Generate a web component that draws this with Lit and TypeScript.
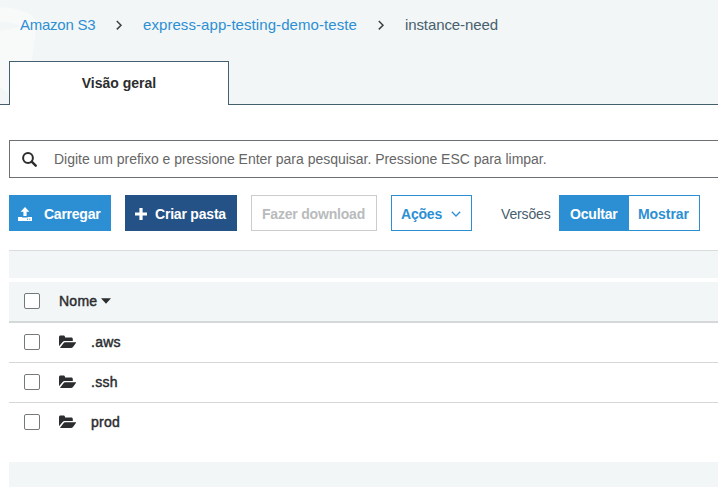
import { LitElement, html, css } from "lit";
import { customElement } from "lit/decorators.js";

const chevron = html`<svg class="chev" width="8" height="11" viewBox="0 0 8 11"><path d="M1.8 1 6 5.2 1.8 9.4" fill="none" stroke="#3c4245" stroke-width="1.5"/></svg>`;

const checkbox = html`<span class="check" role="checkbox" aria-checked="false"></span>`;

const folder = html`<svg class="folder" width="17" height="14" viewBox="0 0 17 14">
  <path d="M0 10.6V2C0 1.1.6.5 1.5.5h3C5.4.5 6 1.1 6 2v.5h6.3c.9 0 1.5.6 1.5 1.5v1.9H6c-1 0-2 .5-2.6 1.3L.2 11Z" fill="#2b2d2e"/>
  <path d="M.9 13 4.3 8.5C4.8 7.8 5.5 7.3 6.3 7.3H16.4c.6 0 .8.4.5.8L14 12c-.5.6-1.2 1-2 1Z" fill="#2b2d2e"/>
</svg>`;

const rows = [".aws", ".ssh", "prod"];

@customElement("app-root")
export class AppRoot extends LitElement {
  static styles = css`
    :host { display: block; height: 487px; overflow: hidden; background: #fff; color: #2b2d2e;
      font: 14px/20px "Liberation Sans", Arial, sans-serif; }
    * { box-sizing: border-box; }
    svg { display: block; flex: none; }
    .head { position: relative; height: 105px; background: #f2f6f7; border-bottom: 1px solid #44606f; }
    .mark { position: absolute; left: 0; top: 0; }
    .crumbs { position: relative; display: flex; align-items: center; height: 50px; padding-left: 20px; white-space: nowrap; color: #48606d; font-size: 15px; }
    .crumbs a { color: #2d8fd3; }
    .crumbs .home { width: 75px; letter-spacing: -0.25px; }
    .crumbs .bucket { width: 214px; letter-spacing: 0.07px; }
    .crumbs .here { letter-spacing: -0.1px; }
    .chev { margin: 0 20px; }
    .tab { position: relative; width: 220px; height: 44px; margin: 11px 0 0 9px; padding-bottom: 1px; background: #fff;
      border: 1px solid #44606f; border-bottom: 0; display: flex; align-items: center; justify-content: center; font-weight: bold; }
    .main { padding-left: 9px; }
    .search { margin-top: 35px; height: 38px; border: 1px solid #6d7073; border-right: 0; display: flex; align-items: center; color: #666; padding-left: 12px; gap: 17px; white-space: nowrap; letter-spacing: -0.02px; }
    .bar { display: flex; margin-top: 17px; height: 36px; align-items: center; white-space: nowrap; }
    .btn { height: 36px; display: flex; align-items: center; font-weight: bold; border: 1px solid #2d8fd3; color: #2d8fd3; background: #fff; margin-right: 14px; padding-top: 1px; letter-spacing: -0.2px; }
    .up { width: 102px; background: #2d8fd3; color: #fff; padding-left: 8px; gap: 12px; letter-spacing: -0.25px; }
    .new { width: 112px; background: #245186; border-color: #245186; color: #fff; padding-left: 9px; gap: 8px; }
    .down { width: 126px; border-color: #ccc; color: #b9bbbc; padding-left: 10px; }
    .acts { width: 81px; padding-left: 9px; margin-right: 29px; }
    .acts span { width: 50px; }
    .ver { color: #48606d; width: 58px; padding-top: 1px; letter-spacing: -0.15px; }
    .seg { margin: 0; padding-left: 10px; }
    .hide { width: 70px; background: #2d8fd3; color: #fff; }
    .show { width: 71px; padding-left: 9px; border-left: 0; letter-spacing: -0.05px; }
    .strip { height: 28px; margin-top: 19px; background: #f2f6f7; border-top: 1px solid #d9dddd; }
    .row { height: 40px; border-bottom: 1px solid #d5d8d8; display: flex; align-items: center; padding: 0 0 1px 15px; letter-spacing: 0.25px; -webkit-text-stroke: 0.45px #2b2d2e; }
    .row.last { border-color: transparent; }
    .th { height: 41px; margin-top: 4px; background: #f2f6f7; border-bottom: 2px solid #d5d8d8; }
    .check { width: 16px; height: 16px; flex: none; border: 1px solid #74797c; border-radius: 2px; background: #fff; margin-right: 19px; }
    .folder { margin-right: 15px; }
    .caret { margin-left: 4px; }
    .foot { height: 25px; margin-top: 19px; background: #f2f6f7; }
  `;

  render() {
    return html`
      <div class="head">
        <svg class="mark" width="40" height="104" viewBox="0 0 40 104">
          <path d="M0 7C18 8 36 14 37 23L31 66 27 92Q14 84 0 68Z" fill="#f8fafa"/>
          <path d="M0 22Q12 22 20 26Q12 30 0 31Z" fill="#f2f6f7"/>
          <path d="M0 68V87Q6 91 10 96V76Z" fill="#f8fafa"/>
        </svg>
        <div class="crumbs">
          <a class="home">Amazon S3</a>${chevron}<a class="bucket">express-app-testing-demo-teste</a>${chevron}<span class="here">instance-need</span>
        </div>
        <div class="tab">Visão geral</div>
      </div>
      <div class="main">
        <div class="search">
          <svg width="15" height="15" viewBox="0 0 15 15" fill="none" stroke="#2b2d2e"><circle cx="6" cy="6" r="4.9" stroke-width="2"/><path d="m9.7 9.7 4 4" stroke-width="2.4" stroke-linecap="round"/></svg>
          <span>Digite um prefixo e pressione Enter para pesquisar. Pressione ESC para limpar.</span>
        </div>
        <div class="bar">
          <div class="btn up">
            <svg width="14" height="14" viewBox="0 0 14 14" fill="#fff"><path d="M7 0 11.4 4.8H8.6V9H5.4V4.8H2.6Z"/><path fill-rule="evenodd" d="M0 10h4.2v.6h5.6V10H14v4H0Zm9 1.7v1h1v-1Zm2.2 0v1h1v-1Z"/></svg>
            <span>Carregar</span>
          </div>
          <div class="btn new">
            <svg width="12" height="12" viewBox="0 0 12 12"><path d="M6 0v12M0 6h12" stroke="#fff" stroke-width="3.2"/></svg>
            <span>Criar pasta</span>
          </div>
          <div class="btn down">Fazer download</div>
          <div class="btn acts"><span>Ações</span>
            <svg width="10" height="6" viewBox="0 0 10 6"><path d="m.8.8 4.2 4.2L9.2.8" fill="none" stroke="#2d8fd3" stroke-width="1.3"/></svg>
          </div>
          <span class="ver">Versões</span>
          <div class="btn seg hide">Ocultar</div>
          <div class="btn seg show">Mostrar</div>
        </div>
        <div class="strip"></div>
        <div class="row th">${checkbox}<span>Nome</span><svg class="caret" width="10" height="6" viewBox="0 0 10 6"><path d="M0 .3h10L5 5.8Z" fill="#2b2d2e"/></svg></div>
        ${rows.map((name, i) => html`<div class="row ${i === rows.length - 1 ? "last" : ""}">${checkbox}${folder}<span>${name}</span></div>`)}
        <div class="foot"></div>
      </div>`;
  }
}
